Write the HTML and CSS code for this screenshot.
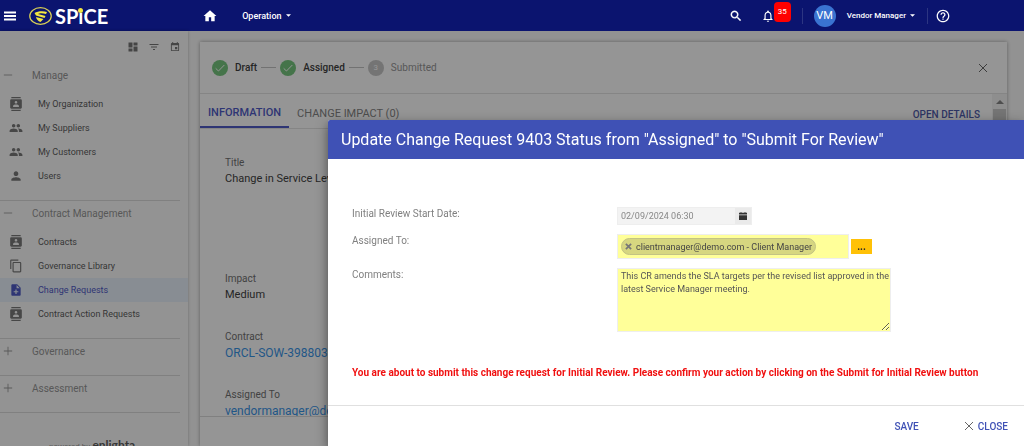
FILE: index.html
```html
<!DOCTYPE html>
<html lang="en">
<head>
    <meta charset="UTF-8">
    <meta name="viewport" content="width=device-width, initial-scale=1.0">
    <title>SPiCE - Change Requests</title>
    <link rel="stylesheet" href="styles.css">
</head>
<body>
    <!-- shared icons -->
    <svg class="sprite" aria-hidden="true">
        <symbol id="contacts" viewBox="0 0 24 24"><path d="M20 0H4v2h16V0zM4 24h16v-2H4v2zM20 4H4c-1.100 0-2 .9-2 2v12c0 1.100.9 2 2 2h16c1.100 0 2-.9 2-2V6c0-1.100-.9-2-2-2zm-8 2.750c1.240 0 2.250 1.010 2.250 2.250s-1.010 2.250-2.250 2.250S9.750 10.240 9.750 9 10.760 6.750 12 6.750zM17 17H7v-1.500c0-1.670 3.330-2.500 5-2.500s5 .83 5 2.500V17z"/></symbol>
        <symbol id="people" viewBox="0 0 24 24"><path d="M16 11c1.660 0 2.990-1.340 2.990-3S17.660 5 16 5s-3 1.340-3 3 1.340 3 3 3zm-8 0c1.660 0 2.990-1.340 2.990-3S9.660 5 8 5 5 6.340 5 8s1.340 3 3 3zm0 2c-2.330 0-7 1.170-7 3.500V19h14v-2.500c0-2.330-4.670-3.500-7-3.500zm8 0c-.29 0-.62.020-.97.050 1.160.84 1.970 1.970 1.970 3.450V19h6v-2.500c0-2.330-4.670-3.500-7-3.500z"/></symbol>
        <symbol id="person" viewBox="0 0 24 24"><path d="M12 12c2.210 0 4-1.790 4-4s-1.790-4-4-4-4 1.790-4 4 1.790 4 4 4zm0 2c-2.670 0-8 1.340-8 4v2h16v-2c0-2.660-5.330-4-8-4z"/></symbol>
        <symbol id="copy" viewBox="0 0 24 24"><path d="M16 1H4c-1.100 0-2 .9-2 2v14h2V3h12V1zm3 4H8c-1.100 0-2 .9-2 2v14c0 1.100.9 2 2 2h11c1.100 0 2-.9 2-2V7c0-1.100-.9-2-2-2zm0 16H8V7h11v14z"/></symbol>
        <symbol id="note-add" viewBox="0 0 24 24"><path d="M14 2H6c-1.100 0-2 .9-2 2v16c0 1.100.9 2 2 2h12c1.100 0 2-.9 2-2V8l-6-6zm2 14h-3v3h-2v-3H8v-2h3v-3h2v3h3v2zm-3-7V3.500L18.500 9H13z"/></symbol>
        <symbol id="close" viewBox="0 0 24 24"><path d="M4 4L20 20M20 4L4 20" fill="none" stroke="currentColor" stroke-width="2"/></symbol>
        <symbol id="minus" viewBox="0 0 24 24"><path d="M2 11h20v2H2z"/></symbol>
        <symbol id="plus" viewBox="0 0 24 24"><path d="M2 11h9V2h2v9h9v2h-9v9h-2v-9H2z"/></symbol>
        <symbol id="check" viewBox="0 0 24 24"><circle cx="12" cy="12" r="12"/><path d="M5.500 12.500l4.200 4L18.500 7.500" fill="none" stroke="#fff" stroke-width="1.500"/></symbol>
        <symbol id="caret" viewBox="0 0 10 5"><path d="M0 0h10L5 5z"/></symbol>
    </svg>

    <header class="topbar">
        <button class="icon-btn menu-btn" aria-label="Menu"><svg viewBox="0 0 24 24"><path d="M0 3h24v4H0zM0 10h24v4H0zM0 17h24v4H0z"/></svg></button>
        <a class="logo" href="#" aria-label="SPiCE">
            <svg class="logo-mark" viewBox="0 0 46 36">
                <ellipse cx="23" cy="18" rx="21.500" ry="16.500" fill="none" stroke="#d8cf55" stroke-width="2.500"/>
                <path d="M11 12C17 8 29 7 36 10L34 14C28 12 21 12 18 14L33 18L31 22L14 17Z" fill="#f3e640"/>
                <path d="M14 20L29 24L23 30C18 28 15 25 14 20Z" fill="#f3e640"/>
            </svg>
            <span class="logo-text">SP<span class="logo-i">ı</span>CE</span>
        </a>
        <nav class="main-nav">
            <a href="#" aria-label="Home"><svg class="home" viewBox="0 0 24 24"><path d="M10 21v-7h4v7h6v-9h3L12 2 1 12h3v9z"/></svg></a>
            <button class="drop">Operation <svg><use href="#caret"/></svg></button>
        </nav>
        <div class="tools">
            <button class="icon-btn" aria-label="Search"><svg viewBox="0 0 24 24"><path stroke="currentColor" stroke-width=".6" d="M15.500 14h-.79l-.28-.27C15.410 12.590 16 11.110 16 9.500 16 5.910 13.090 3 9.500 3S3 5.910 3 9.500 5.910 16 9.500 16c1.610 0 3.090-.59 4.230-1.570l.27.280v.79l5 4.990L20.490 19l-4.990-5zm-6 0C7.010 14 5 11.990 5 9.500S7.010 5 9.500 5 14 7.010 14 9.500 11.990 14 9.500 14z"/></svg></button>
            <button class="icon-btn bell" aria-label="Notifications"><svg viewBox="0 0 24 24"><path d="M12 22c1.100 0 2-.9 2-2h-4c0 1.100.9 2 2 2zm6-6v-5c0-3.070-1.630-5.640-4.500-6.320V4c0-.83-.67-1.500-1.500-1.500s-1.500.67-1.500 1.500v.68C7.640 5.360 6 7.920 6 11v5l-2 2v1h16v-1l-2-2zm-2 1H8v-6c0-2.480 1.510-4.500 4-4.500s4 2.020 4 4.500v6z"/></svg><span class="badge">35</span></button>
            <span class="divider"></span>
            <span class="avatar">VM</span>
            <button class="drop user">Vendor Manager <svg><use href="#caret"/></svg></button>
            <span class="divider"></span>
            <button class="icon-btn" aria-label="Help"><svg viewBox="1 1 22 22"><path d="M11 18h2v-2h-2v2zm1-16C6.480 2 2 6.480 2 12s4.480 10 10 10 10-4.480 10-10S17.520 2 12 2zm0 18c-4.410 0-8-3.590-8-8s3.590-8 8-8 8 3.590 8 8-3.590 8-8 8zm0-14c-2.210 0-4 1.790-4 4h2c0-1.100.9-2 2-2s2 .9 2 2c0 2-3 1.750-3 5h2c0-2.250 3-2.500 3-5 0-2.210-1.790-4-4-4z"/></svg></button>
        </div>
    </header>

    <div class="layout">
        <aside class="sidebar">
            <div class="side-tools">
                <button aria-label="Dashboard"><svg viewBox="2 2 20 20"><path d="M3 13h8V3H3v10zm0 8h8v-6H3v6zm10 0h8V11h-8v10zm0-18v6h8V3h-8z"/></svg></button>
                <button aria-label="Filter"><svg viewBox="2 2 20 20"><path d="M10 18h4v-2h-4v2zM3 6v2h18V6H3zm3 7h12v-2H6v2z"/></svg></button>
                <button aria-label="Calendar"><svg viewBox="1 1 22 22"><path d="M17 12h-5v5h5v-5zM16 1v2H8V1H6v2H5c-1.110 0-2 .9-2 2v14c0 1.100.89 2 2 2h14c1.100 0 2-.9 2-2V5c0-1.100-.9-2-2-2h-1V1h-2zm3 18H5V8h14v11z"/></svg></button>
            </div>
            <section class="group first">
                <button class="group-title"><svg><use href="#minus"/></svg>Manage</button>
                <a href="#"><svg><use href="#contacts"/></svg>My Organization</a>
                <a href="#"><svg><use href="#people"/></svg>My Suppliers</a>
                <a href="#"><svg><use href="#people"/></svg>My Customers</a>
                <a href="#"><svg><use href="#person"/></svg>Users</a>
            </section>
            <section class="group">
                <button class="group-title"><svg><use href="#minus"/></svg>Contract Management</button>
                <a href="#"><svg><use href="#contacts"/></svg>Contracts</a>
                <a href="#"><svg><use href="#copy"/></svg>Governance Library</a>
                <a href="#" class="active"><svg><use href="#note-add"/></svg>Change Requests</a>
                <a href="#"><svg><use href="#contacts"/></svg>Contract Action Requests</a>
            </section>
            <section class="group">
                <button class="group-title"><svg><use href="#plus"/></svg>Governance</button>
            </section>
            <section class="group">
                <button class="group-title"><svg><use href="#plus"/></svg>Assessment</button>
            </section>
            <div class="powered"><small>powered by</small> <b>enlighta</b></div>
        </aside>

        <main class="content">
            <div class="steps">
                <span class="step"><svg><use href="#check"/></svg>Draft</span>
                <span class="line"></span>
                <span class="step"><svg><use href="#check"/></svg>Assigned</span>
                <span class="line"></span>
                <span class="step pending"><i>3</i>Submitted</span>
                <button class="close-btn" aria-label="Close"><svg><use href="#close"/></svg></button>
            </div>
            <div class="tabs">
                <button class="tab active">INFORMATION</button>
                <button class="tab">CHANGE IMPACT (0)</button>
                <a class="open" href="#">OPEN DETAILS</a>
                <div class="scroll"><svg><use href="#caret"/></svg><span></span></div>
            </div>
            <dl class="details">
                <div class="tall"><dt>Title</dt><dd>Change in Service Levels</dd></div>
                <div><dt>Impact</dt><dd>Medium</dd></div>
                <div><dt>Contract</dt><dd><a href="#">ORCL-SOW-398803</a></dd></div>
                <div><dt>Assigned To</dt><dd><a href="#">vendormanager@demo.com</a></dd></div>
            </dl>
            <div class="content-footer"></div>
        </main>
    </div>

    <div class="backdrop"></div>

    <form class="dialog" role="dialog" aria-labelledby="dialog-title">
        <h2 id="dialog-title">Update Change Request 9403 Status from "Assigned" to "Submit For Review"</h2>
        <div class="dialog-body">
            <div class="row">
                <label for="start">Initial Review Start Date:</label>
                <div class="date">
                    <input id="start" type="text" value="02/09/2024 06:30" disabled>
                    <button type="button" aria-label="Pick date" disabled><svg viewBox="0 0 10 10"><path d="M0 1h2V0h1v1h4V0h1v1h2v2H0zM0 4h10v6H0z"/></svg></button>
                </div>
            </div>
            <div class="row">
                <label for="assigned">Assigned To:</label>
                <div class="assign">
                    <div class="chips">
                        <span class="chip"><button type="button" aria-label="Remove"><svg viewBox="0 0 8 8"><path d="M1 1L7 7M7 1L1 7" stroke="currentColor" stroke-width="2"/></svg></button>clientmanager@demo.com - Client Manager</span>
                        <input id="assigned" type="text">
                    </div>
                    <button type="button" class="more">...</button>
                </div>
            </div>
            <div class="row">
                <label for="comments">Comments:</label>
                <textarea id="comments">This CR amends the SLA targets per the revised list approved in the latest Service Manager meeting.</textarea>
            </div>
            <p class="warning">You are about to submit this change request for Initial Review. Please confirm your action by clicking on the Submit for Initial Review button</p>
        </div>
        <div class="dialog-footer">
            <button type="button">SAVE</button>
            <button type="button"><svg><use href="#close"/></svg>CLOSE</button>
        </div>
    </form>
</body>
</html>
```
FILE: styles.css
```css
*{
    margin: 0;
    padding: 0;
    box-sizing: border-box;
}
body{
    height: 100vh;
    overflow: hidden;
    display: flex;
    flex-direction: column;
    font-family: Roboto, "Liberation Sans", sans-serif;
    font-size: 10px;
    color: #2a2a2a;
    background: #fafafa;
}
button, input, textarea{
    font: inherit;
    color: inherit;
    border: 0;
    background: none;
}
a{
    color: inherit;
    text-decoration: none;
}
svg{
    display: block;
    flex: none;
    fill: currentColor;
}
.sprite{
    display: none;
}

/* top bar */
.topbar{
    display: flex;
    align-items: center;
    height: 31px;
    flex: none;
    padding: 0 74px 0 4px;
    color: #fff;
    background: #0b146f;
}
.icon-btn svg{
    width: 14px;
    height: 14px;
}
.menu-btn svg{
    width: 12px;
    height: 12px;
}
.logo{
    display: flex;
    align-items: center;
    gap: 3px;
    margin-left: 13px;
}
.logo-mark{
    width: 23px;
    height: 18px;
}
.logo-text{
    font: bold 20px/24px Lato, sans-serif;
}
.logo-i{
    position: relative;
}
.logo-i::after{
    content: "";
    position: absolute;
    top: 4px;
    left: 0;
    width: 5px;
    height: 5px;
    border-radius: 50%;
    background: #f3e640;
}
.main-nav{
    display: flex;
    align-items: center;
    gap: 25px;
    margin-left: 95px;
}
.home{
    width: 14px;
    height: 14px;
}
.drop{
    display: flex;
    align-items: center;
    gap: 4px;
    font-size: 9px;
    font-weight: 500;
}
.drop svg{
    width: 5px;
    height: 3px;
}
.tools{
    display: flex;
    align-items: center;
    margin-left: auto;
}
.bell{
    position: relative;
    margin: 0 27px 0 18px;
}
.badge{
    position: absolute;
    top: -7px;
    left: 13px;
    width: 17px;
    height: 20px;
    border-radius: 4px;
    background: #f00;
    font-size: 8px;
    line-height: 20px;
}
.divider{
    width: 1px;
    height: 16px;
    background: #2c3582;
}
.avatar{
    width: 22px;
    height: 22px;
    margin: 0 11px;
    border-radius: 50%;
    background: #3a73d1;
    font-size: 11px;
    line-height: 22px;
    text-align: center;
}
.user{
    margin-right: 12px;
    font-size: 8px;
}
.divider + .icon-btn{
    margin-left: 8px;
}

/* sidebar */
.layout{
    display: flex;
    flex: 1;
    min-height: 0;
}
.sidebar{
    width: 188px;
    flex: none;
    padding-right: 8px;
    overflow: hidden;
    color: #4a4a4a;
    background: #fcfcfc;
    box-shadow: 0 0 3px rgba(0,0,0,.3);
}
.side-tools{
    display: flex;
    justify-content: flex-end;
    gap: 11px;
    height: 25px;
    padding-top: 7px;
    color: #666;
}
.side-tools svg{
    width: 10px;
    height: 10px;
}
.group{
    padding-bottom: 12px;
    border-bottom: 1px solid #d6d6d6;
}
.group.first{
    padding-top: 7px;
}
.group-title{
    display: flex;
    align-items: center;
    gap: 19px;
    height: 24px;
    padding-left: 3px;
    color: #8a8a8a;
}
.group-title + a{
    margin-top: 5px;
}
.group-title svg{
    width: 10px;
    height: 10px;
}
.group a{
    display: flex;
    align-items: center;
    gap: 15px;
    height: 24px;
    margin-right: -8px;
    padding-left: 9px;
    font-size: 9px;
}
.group a svg{
    width: 14px;
    height: 14px;
    color: #6a6a6a;
}
.group a.active,
.group a.active svg{
    color: #3a48c0;
}
.group a.active{
    background: #e6effc;
}
.powered{
    padding: 24px 0 0 49px;
    white-space: nowrap;
}
.powered small{
    font-size: 8px;
    color: #888;
}
.powered b{
    font: bold 12px Lato, sans-serif;
}

/* change request */
.content{
    display: flex;
    flex-direction: column;
    flex: 1;
    min-width: 0;
    margin: 11px 17px 0 12px;
    background: #fff;
    box-shadow: 0 0 4px rgba(0,0,0,.4);
}
.steps{
    display: flex;
    align-items: center;
    gap: 4px;
    height: 52px;
    flex: none;
    padding: 0 18px 0 12px;
    border-bottom: 1px solid #e0e0e0;
}
.step{
    display: flex;
    align-items: center;
    gap: 7px;
    font-weight: 500;
}
.step svg{
    width: 16px;
    height: 16px;
    color: #66c070;
}
.step i{
    width: 16px;
    border-radius: 50%;
    background: #c0c0c0;
    color: #fff;
    font-size: 8px;
    font-style: normal;
    line-height: 16px;
    text-align: center;
}
.pending{
    color: #8a8a8a;
    font-weight: normal;
}
.line{
    width: 15px;
    border-top: 1px solid #bdbdbd;
}
.close-btn{
    margin-left: auto;
    color: #555;
}
.close-btn svg{
    width: 12px;
    height: 12px;
}
.tabs{
    display: flex;
    height: 35px;
    flex: none;
    border-bottom: 1px solid #e0e0e0;
}
.tab{
    padding: 5px 8px 0;
    font-size: 11px;
    color: #757575;
}
.tab.active{
    font-weight: 500;
    color: #3a48c0;
    border-bottom: 2px solid #3a48c0;
}
.open{
    margin: 15px 12px 0 auto;
    font-weight: 500;
    color: #3a48a0;
}
.scroll{
    width: 15px;
    padding-top: 6px;
    background: #f1f1f1;
    color: #777;
}
.scroll svg{
    width: 8px;
    height: 4px;
    margin: 0 auto 5px;
    transform: rotate(180deg);
}
.scroll span{
    display: block;
    width: 13px;
    height: 19px;
    margin: 0 auto;
    background: #c1c1c1;
}
.details{
    flex: 1;
    min-height: 0;
    overflow: hidden;
    padding: 26px 25px 0;
}
.content-footer{
    height: 30px;
    flex: none;
    border-top: 1px solid #d6d6d6;
}
.details > div{
    height: 58px;
}
.details > .tall{
    height: 116px;
}
.details dt{
    line-height: 16px;
    color: #616161;
}
.details dd{
    font-size: 11px;
    line-height: 16px;
}
.details a{
    font-size: 12px;
    color: #1e88e5;
}
.backdrop{
    position: fixed;
    inset: 31px 0 0;
    background: rgba(33,33,33,.48);
}

/* dialog */
.dialog{
    position: fixed;
    inset: 120px 0 0 328px;
    display: flex;
    flex-direction: column;
    background: #fff;
    border-radius: 2px 0 0 0;
    box-shadow: 0 4px 12px rgba(0,0,0,.5);
}
.dialog h2{
    padding: 0 13px;
    font-size: 16px;
    font-weight: normal;
    line-height: 39px;
    color: #fff;
    background: #3f51b5;
    border-radius: 2px 0 0 0;
}
.dialog-body{
    display: flex;
    flex-direction: column;
    flex: 1;
    gap: 9px;
    padding: 48px 20px 0 24px;
}
.row{
    display: grid;
    grid-template-columns: 265px 1fr;
}
.row label{
    line-height: 14px;
    color: #808080;
}
.date{
    display: flex;
    width: 135px;
    height: 18px;
    border: 1px solid #eee;
    background: #f3f3f3;
    font-size: 9px;
}
.date input{
    flex: 1;
    min-width: 0;
    padding: 0 3px;
    color: #888;
}
.date button{
    width: 16px;
    padding: 4px;
    background: #eaeaea;
    color: #333;
}
.assign{
    display: flex;
    align-items: center;
    gap: 2px;
}
.chips{
    display: flex;
    align-items: center;
    width: 232px;
    height: 25px;
    padding: 0 3px;
    border: 1px solid #eee;
    background: #ff9;
}
.chips input{
    flex: 1;
    min-width: 0;
}
.chip{
    display: flex;
    align-items: center;
    gap: 4px;
    height: 17px;
    padding: 0 3px;
    border: 1px solid #c3c384;
    border-radius: 9px;
    background: #d6d680;
    color: #444;
    font-size: 9px;
    white-space: nowrap;
}
.chip svg{
    width: 7px;
    height: 7px;
    color: #777;
}
.more{
    width: 21px;
    height: 15px;
    background: #ffc107;
    font-weight: bold;
    line-height: 15px;
}
.row textarea{
    width: 274px;
    height: 64px;
    padding: 1px 0 1px 3px;
    border: 1px solid #eee;
    background: #ff9;
    color: #555;
    font-size: 9px;
    line-height: 13px;
}
.warning{
    margin-top: 24px;
    font-weight: bold;
    line-height: 16px;
    color: #f01010;
    white-space: nowrap;
}
.dialog-footer{
    display: flex;
    justify-content: flex-end;
    gap: 44px;
    height: 41px;
    padding-right: 16px;
    border-top: 1px solid #e0e0e0;
}
.dialog-footer button{
    display: flex;
    align-items: center;
    gap: 3px;
    font-weight: 500;
    color: #3f51b5;
}
.dialog-footer svg{
    width: 12px;
    height: 12px;
    color: #666;
}
```
